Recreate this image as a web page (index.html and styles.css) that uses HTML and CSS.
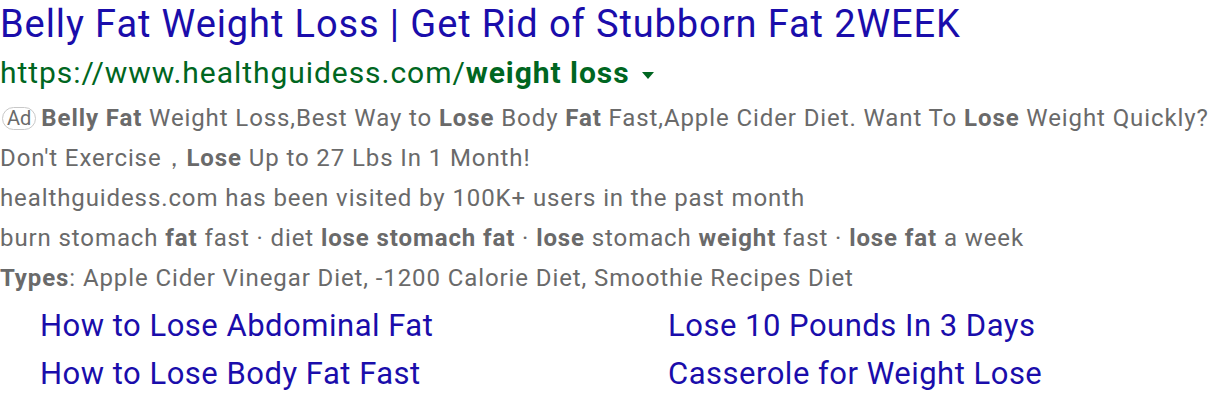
FILE: index.html
```html
<!DOCTYPE html>
<html>
<head>
<meta charset="utf-8">
<link rel="stylesheet" href="styles.css">
</head>
<body>
<div class="ad">
  <div class="title">Belly Fat Weight Loss | Get Rid of Stubborn Fat 2WEEK</div>
  <div class="url">https://www.healthguidess.com/<b>weight loss</b><span class="caret"></span></div>
  <div class="desc">
    <div class="line"><span class="badge">Ad</span><b>Belly Fat</b> Weight Loss,Best Way to <b>Lose</b> Body <b>Fat</b> Fast,Apple Cider Diet. Want To <b>Lose</b> Weight Quickly?</div>
    <div class="line">Don't Exercise，<b>Lose</b> Up to 27 Lbs In 1 Month!</div>
    <div class="line">healthguidess.com has been visited by 100K+ users in the past month</div>
    <div class="line">burn stomach <b>fat</b> fast · diet <b>lose stomach fat</b> · <b>lose</b> stomach <b>weight</b> fast · <b>lose fat</b> a week</div>
    <div class="line"><b>Types</b>: Apple Cider Vinegar Diet, -1200 Calorie Diet, Smoothie Recipes Diet</div>
  </div>
  <div class="sitelinks">
    <a>How to Lose Abdominal Fat</a>
    <a>Lose 10 Pounds In 3 Days</a>
    <a>How to Lose Body Fat Fast</a>
    <a>Casserole for Weight Lose</a>
  </div>
</div>
</body>
</html>
```
FILE: styles.css
```css
html, body {
  margin: 0;
  background: #fff;
}
.ad {
  font-family: Roboto, "Liberation Sans", sans-serif;
}
.title {
  font-size: 38px;
  letter-spacing: 0.9px;
  line-height: 48px;
  color: #1a0dab;
  white-space: nowrap;
}
.url {
  font-size: 30px;
  letter-spacing: 0.95px;
  line-height: 40px;
  margin-top: 5px;
  color: #006621;
  white-space: nowrap;
  display: flex;
  align-items: center;
}
.url b {
  font-weight: 700;
  white-space: pre;
}
.caret {
  width: 0;
  height: 0;
  border-left: 6px solid transparent;
  border-right: 6px solid transparent;
  border-top: 7px solid #006621;
  margin-left: 12px;
  margin-top: 4px;
}
.desc {
  margin-top: 5px;
  font-size: 24px;
  letter-spacing: 0.9px;
  line-height: 40px;
  color: #6a6a6a;
}
.desc b {
  font-weight: 700;
}
.line {
  white-space: nowrap;
}
.badge {
  display: inline-block;
  font-size: 20px;
  letter-spacing: 0;
  line-height: 21px;
  padding: 0 4px;
  border: 1px solid #c8c8c8;
  border-radius: 12px;
  color: #6a6a6a;
  margin: 0 5px 0 2px;
  vertical-align: 1px;
}
.sitelinks {
  margin-top: 4px;
  padding-left: 40px;
  display: grid;
  grid-template-columns: 628px auto;
  font-size: 31px;
  letter-spacing: 0.5px;
  line-height: 48px;
  color: #1a0dab;
}
.sitelinks a {
  white-space: nowrap;
}
```
